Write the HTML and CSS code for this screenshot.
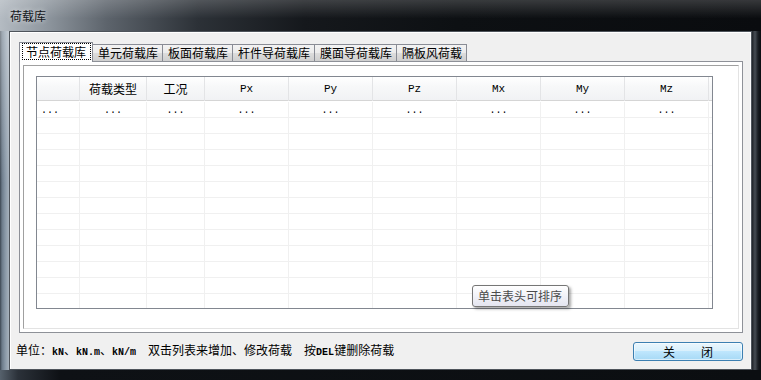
FILE: index.html
```html
<!DOCTYPE html>
<html lang="zh">
<head>
<meta charset="utf-8">
<title>荷载库</title>
<link rel="stylesheet" href="styles.css">
</head>
<body>
<div class="window">
  <div class="titlebar"><span class="title">荷载库</span></div>
  <div class="middle">
    <div class="frame-left"></div>
    <div class="client">
      <div class="tabs">
        <div class="tab active"><span class="focus">节点荷载库</span></div>
        <div class="tab">单元荷载库</div>
        <div class="tab">板面荷载库</div>
        <div class="tab">杆件导荷载库</div>
        <div class="tab">膜面导荷载库</div>
        <div class="tab">隔板风荷载</div>
      </div>
      <div class="panel">
        <div class="page">
          <div class="grid">
            <div class="head">
              <div class="hc"></div>
              <div class="hc">荷载类型</div>
              <div class="hc">工况</div>
              <div class="hc mono">Px</div>
              <div class="hc mono">Py</div>
              <div class="hc mono">Pz</div>
              <div class="hc mono">Mx</div>
              <div class="hc mono">My</div>
              <div class="hc mono">Mz</div>
              <div class="hc last"></div>
            </div>
            <div class="body">
              <div class="row">
                <div class="c first">...</div><div class="c">...</div><div class="c">...</div><div class="c">...</div><div class="c">...</div><div class="c">...</div><div class="c">...</div><div class="c">...</div><div class="c">...</div><div class="c last"></div>
              </div>
              <div class="row"><div class="c"></div><div class="c"></div><div class="c"></div><div class="c"></div><div class="c"></div><div class="c"></div><div class="c"></div><div class="c"></div><div class="c"></div><div class="c last"></div></div>
              <div class="row"><div class="c"></div><div class="c"></div><div class="c"></div><div class="c"></div><div class="c"></div><div class="c"></div><div class="c"></div><div class="c"></div><div class="c"></div><div class="c last"></div></div>
              <div class="row"><div class="c"></div><div class="c"></div><div class="c"></div><div class="c"></div><div class="c"></div><div class="c"></div><div class="c"></div><div class="c"></div><div class="c"></div><div class="c last"></div></div>
              <div class="row"><div class="c"></div><div class="c"></div><div class="c"></div><div class="c"></div><div class="c"></div><div class="c"></div><div class="c"></div><div class="c"></div><div class="c"></div><div class="c last"></div></div>
              <div class="row"><div class="c"></div><div class="c"></div><div class="c"></div><div class="c"></div><div class="c"></div><div class="c"></div><div class="c"></div><div class="c"></div><div class="c"></div><div class="c last"></div></div>
              <div class="row"><div class="c"></div><div class="c"></div><div class="c"></div><div class="c"></div><div class="c"></div><div class="c"></div><div class="c"></div><div class="c"></div><div class="c"></div><div class="c last"></div></div>
              <div class="row"><div class="c"></div><div class="c"></div><div class="c"></div><div class="c"></div><div class="c"></div><div class="c"></div><div class="c"></div><div class="c"></div><div class="c"></div><div class="c last"></div></div>
              <div class="row"><div class="c"></div><div class="c"></div><div class="c"></div><div class="c"></div><div class="c"></div><div class="c"></div><div class="c"></div><div class="c"></div><div class="c"></div><div class="c last"></div></div>
              <div class="row"><div class="c"></div><div class="c"></div><div class="c"></div><div class="c"></div><div class="c"></div><div class="c"></div><div class="c"></div><div class="c"></div><div class="c"></div><div class="c last"></div></div>
              <div class="row"><div class="c"></div><div class="c"></div><div class="c"></div><div class="c"></div><div class="c"></div><div class="c"></div><div class="c"></div><div class="c"></div><div class="c"></div><div class="c last"></div></div>
              <div class="row"><div class="c"></div><div class="c"></div><div class="c"></div><div class="c"></div><div class="c"></div><div class="c"></div><div class="c"></div><div class="c"></div><div class="c"></div><div class="c last"></div></div>
              <div class="row"><div class="c"></div><div class="c"></div><div class="c"></div><div class="c"></div><div class="c"></div><div class="c"></div><div class="c"></div><div class="c"></div><div class="c"></div><div class="c last"></div></div>
            </div>
          </div>
        </div>
      </div>
      <div class="footer">
        <div class="hint">单位：<span class="mono-b">kN</span>、<span class="mono-b">kN.m</span>、<span class="mono-b">kN/m</span>　双击列表来增加、修改荷载　按<span class="mono-b">DEL</span>键删除荷载</div>
        <button class="btn"><span>关</span><span>闭</span></button>
      </div>
    </div>
    <div class="frame-right"></div>
  </div>
  <div class="frame-bottom"></div>
  <div class="tooltip">单击表头可排序</div>
</div>
</body>
</html>
```
FILE: styles.css
```css
* {
  box-sizing: border-box;
  margin: 0;
  padding: 0;
}

body {
  margin: 0;
  width: 761px;
  height: 380px;
  overflow: hidden;
  background: #0c0f13;
  font-family: "Noto Sans CJK SC", "Noto Sans", sans-serif;
  font-size: 12px;
  color: #000;
}

.window {
  position: relative;
  width: 761px;
  height: 380px;
  display: flex;
  flex-direction: column;
}

.titlebar {
  height: 31px;
  flex: none;
  display: flex;
  align-items: center;
  padding-left: 10px;
  background:
    linear-gradient(to bottom, rgba(255,255,255,0.18), rgba(255,255,255,0) 60%),
    linear-gradient(to right, #b4bbc2 0%, #8f979f 6%, #5d646c 14%, #2c3137 26%, #15181c 40%, #0d1013 60%, #0a0c0f 100%);
}

.title {
  font-size: 12px;
  line-height: 14px;
  color: #14161a;
  text-shadow: 0 0 5px rgba(255,255,255,0.7);
}

.middle {
  flex: 1;
  display: flex;
}

.frame-left {
  width: 9px;
  flex: none;
  background:
    linear-gradient(to bottom, rgba(255,255,255,0.35), rgba(255,255,255,0) 45%),
    linear-gradient(to right, #3c4651 0px, #6b7a89 2px, #8796a5 5px, #a7b2bd 9px);
}

.frame-right {
  width: 9px;
  flex: none;
  background: linear-gradient(to right, #202429 0px, #474d54 3px, #1a1e23 6px, #0a0c10 9px);
}

.frame-bottom {
  height: 10px;
  flex: none;
  background: linear-gradient(to right, #56616c 0px, #2b3139 18px, #0e1115 60px, #0b0e11 100%);
}

.client {
  width: 743px;
  flex: none;
  border: 1px solid #4e545b;
  background: #f0f0f0;
  box-shadow: inset -1px 0 0 #fafafa, inset 1px 1px 0 #ffffff;
  padding: 10px 8px 0 9px;
  display: flex;
  flex-direction: column;
}

/* tabs */
.tabs {
  height: 20px;
  flex: none;
  display: flex;
  align-items: flex-end;
  position: relative;
  z-index: 2;
  margin-bottom: -1px;
}

.tab {
  height: 17px;
  margin-bottom: 1px;
  margin-left: -1px;
  padding: 0 4px 0 5px;
  border: 1px solid #898c95;
  border-bottom: none;
  line-height: 16px;
  white-space: nowrap;
  background: linear-gradient(to bottom, #f3f3f3 0%, #ebebeb 50%, #dddddd 50%, #cfcfcf 100%);
}

.tab.active {
  position: relative;
  z-index: 1;
  width: 74px;
  height: 20px;
  margin: 0;
  padding: 0 1px 0 2px;
  background: #ffffff;
}

.focus {
  display: block;
  height: 17px;
  border: 1px dotted #000;
  padding: 0 4px 0 3px;
  line-height: 15px;
}

/* panel */
.panel {
  height: 272px;
  flex: none;
  border: 1px solid #8e9198;
  background: #ffffff;
  padding: 3px;
}

.page {
  height: 100%;
  border: 1px solid;
  border-color: #a0a0a0 #e3e3e3 #e3e3e3 #a0a0a0;
  padding: 10px 0 0 12px;
}

.grid {
  width: 677px;
  height: 233px;
  border: 1px solid #828790;
  overflow: hidden;
  background: #fff;
}

.head,
.row {
  display: grid;
  grid-template-columns: 43px 67px 58px repeat(6, 84px) 3px;
}

.head {
  height: 24px;
  border-bottom: 1px solid #d5d5d5;
  background: linear-gradient(to bottom, #ffffff 0%, #f7f8f9 40%, #f1f2f4 100%);
}

.hc {
  border-right: 1px solid #e3e4e6;
  text-align: center;
  line-height: 24px;
  white-space: nowrap;
}

.hc.last,
.c.last {
  border-right: none;
}

.mono {
  font-family: "Liberation Mono", "DejaVu Sans Mono", monospace;
  font-size: 11px;
}

.body {
  padding-top: 1px;
}

.row {
  height: 16px;
  border-bottom: 1px solid #f0f0f0;
}

.c {
  border-right: 1px solid #f0f0f0;
  text-align: center;
  font-family: "Liberation Mono", "DejaVu Sans Mono", monospace;
  font-size: 10px;
  line-height: 17px;
  white-space: nowrap;
}

.c.first {
  text-align: left;
  padding-left: 4px;
}

/* footer */
.footer {
  height: 19px;
  flex: none;
  margin: 9px 0 0 -3px;
  display: flex;
  align-items: center;
  justify-content: space-between;
}

.hint {
  white-space: nowrap;
  line-height: 16px;
}

.mono-b {
  font-family: "Liberation Mono", "DejaVu Sans Mono", monospace;
  font-size: 10px;
  font-weight: bold;
}

.btn {
  width: 110px;
  height: 19px;
  border: 1px solid #3c7fb1;
  border-radius: 3px;
  background: linear-gradient(to bottom, #eaf6fd 0%, #d9f0fc 45%, #bee6fd 50%, #a7d9f5 100%);
  box-shadow: inset 0 0 0 1px rgba(255,255,255,0.55);
  display: flex;
  justify-content: center;
  align-items: center;
  gap: 26px;
  font-family: "Noto Sans CJK SC", sans-serif;
  font-size: 12px;
  line-height: 14px;
  color: #000;
}

/* tooltip overlay */
.tooltip {
  position: absolute;
  left: 472px;
  top: 285px;
  width: 97px;
  height: 22px;
  border: 1px solid #767676;
  border-radius: 3px;
  background: linear-gradient(to bottom, #ffffff 0%, #e4e5f0 100%);
  box-shadow: 2px 2px 3px rgba(0,0,0,0.35);
  color: #4c4c4c;
  line-height: 20px;
  padding-left: 5px;
  white-space: nowrap;
}
```
